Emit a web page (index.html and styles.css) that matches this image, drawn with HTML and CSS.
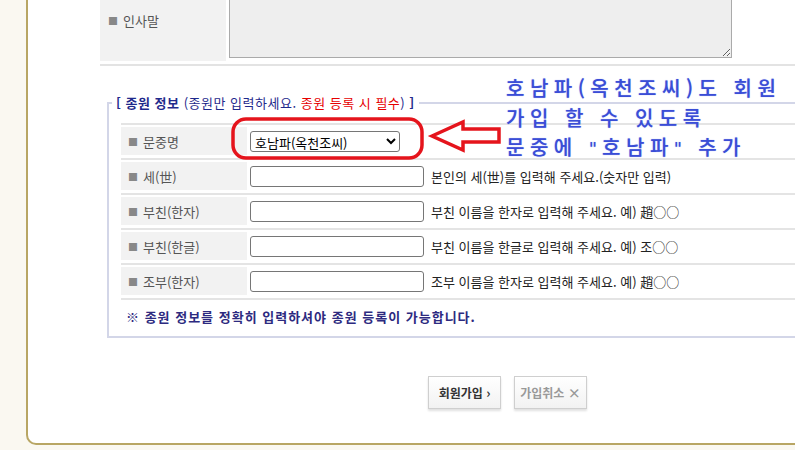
FILE: index.html
```html
<!DOCTYPE html>
<html lang="ko">
<head>
  <meta charset="UTF-8" />
  <meta name="viewport" content="width=device-width, initial-scale=1.0" />
  <title>종원 가입</title>
  <link rel="stylesheet" href="styles.css">
</head>
<body>

  <div class="page">
    <div class="form">
      <div class="row-greet">
        <div class="label tall"><span class="sq">■</span>인사말</div>
        <textarea class="greet"></textarea>
      </div>
      <div class="sep"></div>

      <fieldset class="clan">
        <legend><b>[ 종원 정보</b> (종원만 입력하세요. <span class="red">종원 등록 시 필수</span>) <b>]</b></legend>
        <div class="rows">
          <div class="row">
            <div class="label"><span class="sq">■</span>문중명</div>
            <div class="field">
              <select class="clan-select">
                <option>호남파(옥천조씨)</option>
              </select>
            </div>
          </div>
          <div class="row">
            <div class="label"><span class="sq">■</span>세(世)</div>
            <div class="field"><input type="text" class="box"><span class="help">본인의 세(世)를 입력해 주세요.(숫자만 입력)</span></div>
          </div>
          <div class="row">
            <div class="label"><span class="sq">■</span>부친(한자)</div>
            <div class="field"><input type="text" class="box"><span class="help">부친 이름을 한자로 입력해 주세요. 예) 趙○○</span></div>
          </div>
          <div class="row">
            <div class="label"><span class="sq">■</span>부친(한글)</div>
            <div class="field"><input type="text" class="box"><span class="help">부친 이름을 한글로 입력해 주세요. 예) 조○○</span></div>
          </div>
          <div class="row">
            <div class="label"><span class="sq">■</span>조부(한자)</div>
            <div class="field"><input type="text" class="box"><span class="help">조부 이름을 한자로 입력해 주세요. 예) 趙○○</span></div>
          </div>
        </div>
        <p class="notice">※ 종원 정보를 정확히 입력하셔야 종원 등록이 가능합니다.</p>
      </fieldset>

      <div class="buttons">
        <button class="btn">회원가입 <span class="ico">›</span></button>
        <button class="btn cancel">가입취소 <span class="ico">×</span></button>
      </div>
    </div>
  </div>

  <!-- annotation drawn over the screenshot -->
  <div class="memo">호남파(옥천조씨)도 회원<br>가입 할 수 있도록<br>문중에 <span class="q">"</span>호남파<span class="q">"</span> 추가</div>
  <svg class="marks" width="795" height="450" viewBox="0 0 795 450">
    <rect x="233" y="119" width="189" height="39" rx="13" ry="13" fill="none" stroke="#e5141c" stroke-width="3.5"/>
    <polygon points="432,136 463,122 463,129 499,129 499,142 463,142 463,150" fill="none" stroke="#e5141c" stroke-width="3.5" stroke-linejoin="miter"/>
  </svg>

</body>
</html>
```

FILE: styles.css
```css
/* Page base */
html, body {
  margin: 0;
  padding: 0;
}

body {
  background-color: #faf8f1;
  font-family: "Noto Sans CJK KR", "Noto Sans", sans-serif;
  font-size: 13px;
  color: #222;
  width: 795px;
  height: 450px;
  overflow: hidden;
  position: relative;
}

/* White panel with gold frame */
.page {
  margin-top: -21px;
  margin-left: 26px;
  height: 466px;
  box-sizing: border-box;
  background-color: #fff;
  border-left: 2px solid #b8a664;
  border-bottom: 2px solid #b8a664;
  border-bottom-left-radius: 10px;
  overflow: hidden;
}

.form {
  padding-left: 72px;
}

/* Label cells */
.label {
  width: 126px;
  height: 28px;
  flex-shrink: 0;
  box-sizing: border-box;
  padding-left: 7px;
  background-color: #f2f2f2;
  color: #555;
  display: flex;
  align-items: center;
}

.label.tall {
  height: 82px;
  padding-left: 8px;
}

.sq {
  color: #888;
  font-size: 10px;
  margin-right: 5px;
}

/* Greeting row */
.row-greet {
  display: flex;
  align-items: flex-start;
}

.greet {
  margin: 0 0 0 3px;
  width: 503px;
  height: 79px;
  box-sizing: border-box;
  background-color: #eee;
  border: 1px solid #aaa;
  resize: both;
}

.sep {
  margin-top: 3px;
  height: 2px;
  width: 900px;
  background-color: #e3e3e3;
}

/* Clan fieldset */
.clan {
  margin: 29px 0 0 7px;
  padding: 12px 0 10px 12px;
  width: 800px;
  border: 2px solid #d3d6e8;
  min-width: 0;
}

.clan legend {
  margin-left: -9px;
  padding: 0 4px;
  line-height: 16px;
  letter-spacing: 0.5px;
  color: #1f2a8c;
}

.red {
  color: #e60000;
}

.row {
  display: flex;
  align-items: center;
  border-top: 2px solid #e4e4e4;
  padding: 2px 0 3px;
}

.row:last-child {
  border-bottom: 2px solid #e4e4e4;
}

.field {
  display: flex;
  align-items: center;
  margin-left: 3px;
}

.box {
  width: 174px;
  height: 21px;
  box-sizing: border-box;
  border: 1px solid #767676;
  border-radius: 3px;
  margin: 0;
}

.clan-select {
  width: 150px;
  height: 21px;
  box-sizing: border-box;
  margin: 0;
  font-family: "Noto Sans CJK KR", sans-serif;
  font-size: 13px;
  color: #000;
  border: 1px solid #767676;
  border-radius: 3px;
  background-color: #fff;
}

.help {
  margin-left: 7px;
  color: #222;
  white-space: nowrap;
}

.notice {
  margin: 8px 0 0 5px;
  line-height: 18px;
  font-weight: bold;
  letter-spacing: 1px;
  color: #2d2a80;
}

/* Bottom buttons */
.buttons {
  display: flex;
  gap: 13px;
  margin-top: 38px;
  padding-left: 328px;
}

.btn {
  width: 73px;
  height: 33px;
  padding: 0;
  background: linear-gradient(#ffffff, #f2f2f2);
  border: 1px solid #cfcfcf;
  box-shadow: 0 2px 2px rgba(0, 0, 0, 0.12);
  font-family: "Noto Sans CJK KR", sans-serif;
  font-size: 12px;
  font-weight: bold;
  color: #333;
}

.btn.cancel {
  color: #999;
}

.ico {
  font-size: 13px;
}

/* Annotation overlay */
.memo {
  position: absolute;
  left: 506px;
  top: 73px;
  font-size: 20px;
  font-weight: 500;
  line-height: 29.5px;
  letter-spacing: 5.5px;
  color: #3a4dd6;
  text-shadow: 0 0 1px #8f9cf0;
  white-space: nowrap;
}

.memo .q {
  font-family: "DejaVu Sans", sans-serif;
  font-size: 18px;
  letter-spacing: 5px;
}

.marks {
  position: absolute;
  left: 0;
  top: 0;
  pointer-events: none;
}
```
